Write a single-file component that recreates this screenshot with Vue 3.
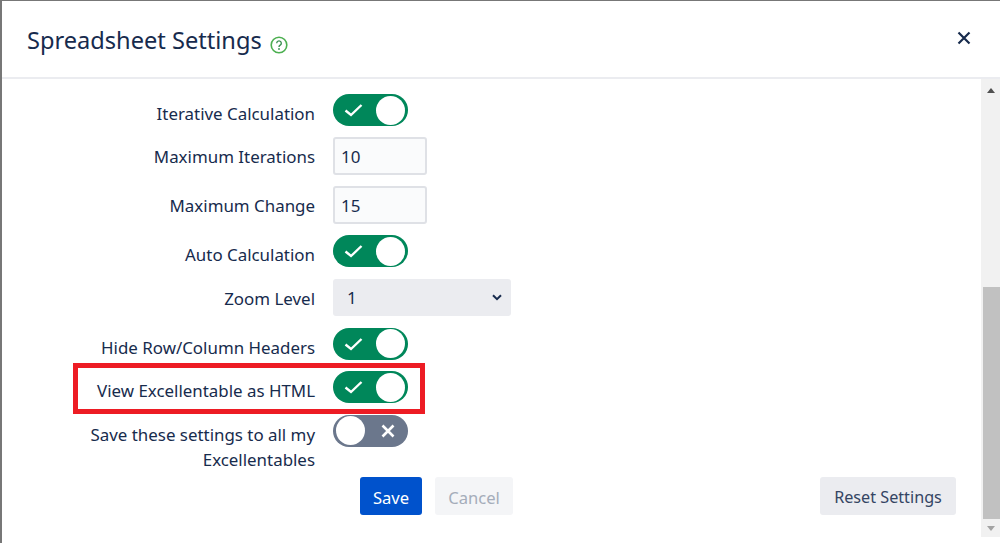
<script setup>
const rows = [
  { label: 'Iterative Calculation', type: 'toggle', on: true },
  { label: 'Maximum Iterations', type: 'input', value: '10' },
  { label: 'Maximum Change', type: 'input', value: '15' },
  { label: 'Auto Calculation', type: 'toggle', on: true },
  { label: 'Zoom Level', type: 'select', value: '1' },
  { label: 'Hide Row/Column Headers', type: 'toggle', on: true },
  { label: 'View Excellentable as HTML', type: 'toggle', on: true, marked: true },
  { label: 'Save these settings to all my Excellentables', type: 'toggle', on: false },
]
</script>

<template>
  <div class="modal">
    <header class="head">
      <h1>Spreadsheet Settings</h1>
      <svg class="help" viewBox="0 0 18 18" width="18" height="18">
        <circle cx="9" cy="9" r="7.8" fill="none" stroke="#4caf50" stroke-width="1.6" />
        <path d="M6.7 7.2a2.3 2.3 0 1 1 3.5 2c-.8.5-1.2.9-1.2 1.7" fill="none" stroke="#3a8f52" stroke-width="1.4" />
        <circle cx="9" cy="13" r=".9" fill="#3a8f52" />
      </svg>
      <svg class="close" viewBox="0 0 14 14" width="14" height="14">
        <path d="M1.5 1.5l11 11M12.5 1.5l-11 11" stroke="#172b4d" stroke-width="2.2" />
      </svg>
    </header>

    <div class="content">
      <main class="body">
        <form class="form" @submit.prevent>
          <div v-for="row in rows" :key="row.label" class="row">
            <label>{{ row.label }}</label>
            <div class="control">
              <span v-if="row.type === 'toggle'" class="toggle" :class="{ off: !row.on }">
                <svg v-if="row.on" class="mark" viewBox="0 0 19 14" width="19" height="14">
                  <path d="M1.5 7.5l5.5 4.5 10.5-10" fill="none" stroke="#fff" stroke-width="2.4" />
                </svg>
                <span class="knob"></span>
                <svg v-if="!row.on" class="mark" viewBox="0 0 14 14" width="14" height="14">
                  <path d="M1.5 1.5l11 11M12.5 1.5l-11 11" stroke="#fff" stroke-width="2.6" />
                </svg>
              </span>
              <input v-else-if="row.type === 'input'" class="field" :value="row.value" />
              <span v-else class="select">
                {{ row.value }}
                <svg viewBox="0 0 10 7" width="10" height="7">
                  <path d="M1 1.2l4 4 4-4" fill="none" stroke="#172b4d" stroke-width="2" />
                </svg>
              </span>
            </div>
            <span v-if="row.marked" class="mark-box"></span>
          </div>
        </form>

        <div class="actions">
          <button class="btn primary">Save</button>
          <button class="btn disabled">Cancel</button>
          <button class="btn reset">Reset Settings</button>
        </div>
      </main>

      <div class="scrollbar">
        <span class="arrow up"></span>
        <span class="track"><span class="thumb"></span></span>
        <span class="arrow down"></span>
      </div>
    </div>
  </div>
</template>

<style scoped>
.modal {
  width: 1000px;
  height: 543px;
  box-sizing: border-box;
  border-top: 1px solid #777;
  border-left: 2px solid #777;
  background: #fff;
  color: #172b4d;
  font-family: "Noto Sans", "Open Sans", sans-serif;
  display: flex;
  flex-direction: column;
  overflow: hidden;
}

.head {
  height: 76px;
  flex: none;
  display: flex;
  align-items: center;
  padding: 0 29px 0 25px;
  border-bottom: 2px solid #ebecf0;
}

.head h1 {
  margin: 2px 0 0;
  font-size: 23.6px;
  font-weight: 400;
  line-height: 32px;
}

.help {
  margin: 12px 0 0 8px;
}

.close {
  margin-left: auto;
  margin-bottom: 2px;
}

.content {
  flex: none;
  height: 458px;
  display: flex;
}

.body {
  flex: 1;
  padding-top: 15px;
}

.form {
  display: flex;
  flex-direction: column;
  gap: 11.4px;
}

.row {
  display: grid;
  grid-template-columns: 313px 1fr;
  column-gap: 18px;
  position: relative;
}

.row label {
  text-align: right;
  font-size: 16.9px;
  line-height: 25px;
  padding-top: 7px;
}

.control {
  display: flex;
}

.toggle {
  width: 75px;
  height: 32px;
  border-radius: 16px;
  background: #00875a;
  display: flex;
  align-items: center;
  justify-content: space-between;
  padding: 0 3px 0 11px;
  box-sizing: border-box;
}

.toggle.off {
  background: #6b778c;
  padding: 0 13px 0 3px;
}

.knob {
  width: 29px;
  height: 29px;
  border-radius: 50%;
  background: #fff;
}

.field {
  width: 94px;
  height: 37.6px;
  box-sizing: border-box;
  border: 2px solid #dfe1e6;
  border-radius: 3px;
  background: #fafbfc;
  padding: 0 6px;
  font: inherit;
  font-size: 17px;
  color: #172b4d;
}

.select {
  width: 178px;
  height: 37.6px;
  box-sizing: border-box;
  border-radius: 3px;
  background: #ebecf0;
  padding: 0 9px 0 14px;
  display: flex;
  align-items: center;
  justify-content: space-between;
  font-size: 17px;
}

.mark-box {
  position: absolute;
  left: 71px;
  top: -8px;
  width: 352px;
  height: 51px;
  box-sizing: border-box;
  border: 5px solid #ed1c24;
}

.actions {
  display: flex;
  margin-top: 5.4px;
  padding-left: 358px;
  padding-right: 25px;
}

.btn {
  height: 38px;
  border: none;
  border-radius: 3px;
  font: inherit;
  font-size: 16.6px;
  padding: 3px 0 0;
}

.primary {
  width: 62px;
  background: #0052cc;
  color: #fff;
}

.disabled {
  width: 78px;
  margin-left: 13px;
  background: #f4f5f7;
  color: #a5adba;
}

.reset {
  width: 136px;
  margin-left: auto;
  background: #ebecf0;
  color: #344563;
  font-size: 16.2px;
}

.scrollbar {
  width: 19px;
  flex: none;
  background: #f1f1f1;
  display: flex;
  flex-direction: column;
}

.arrow {
  height: 18px;
  flex: none;
  display: flex;
  align-items: center;
  justify-content: center;
}

.arrow::before {
  content: "";
  border-left: 4.5px solid transparent;
  border-right: 4.5px solid transparent;
}

.up {
  height: 23px;
}

.up::before {
  border-bottom: 5px solid #505050;
}

.down::before {
  border-top: 5px solid #a3a3a3;
}

.track {
  flex: 1;
  display: flex;
  flex-direction: column;
  justify-content: flex-end;
}

.thumb {
  height: 232px;
  background: #c1c1c1;
  margin-left: 2px;
}
</style>
